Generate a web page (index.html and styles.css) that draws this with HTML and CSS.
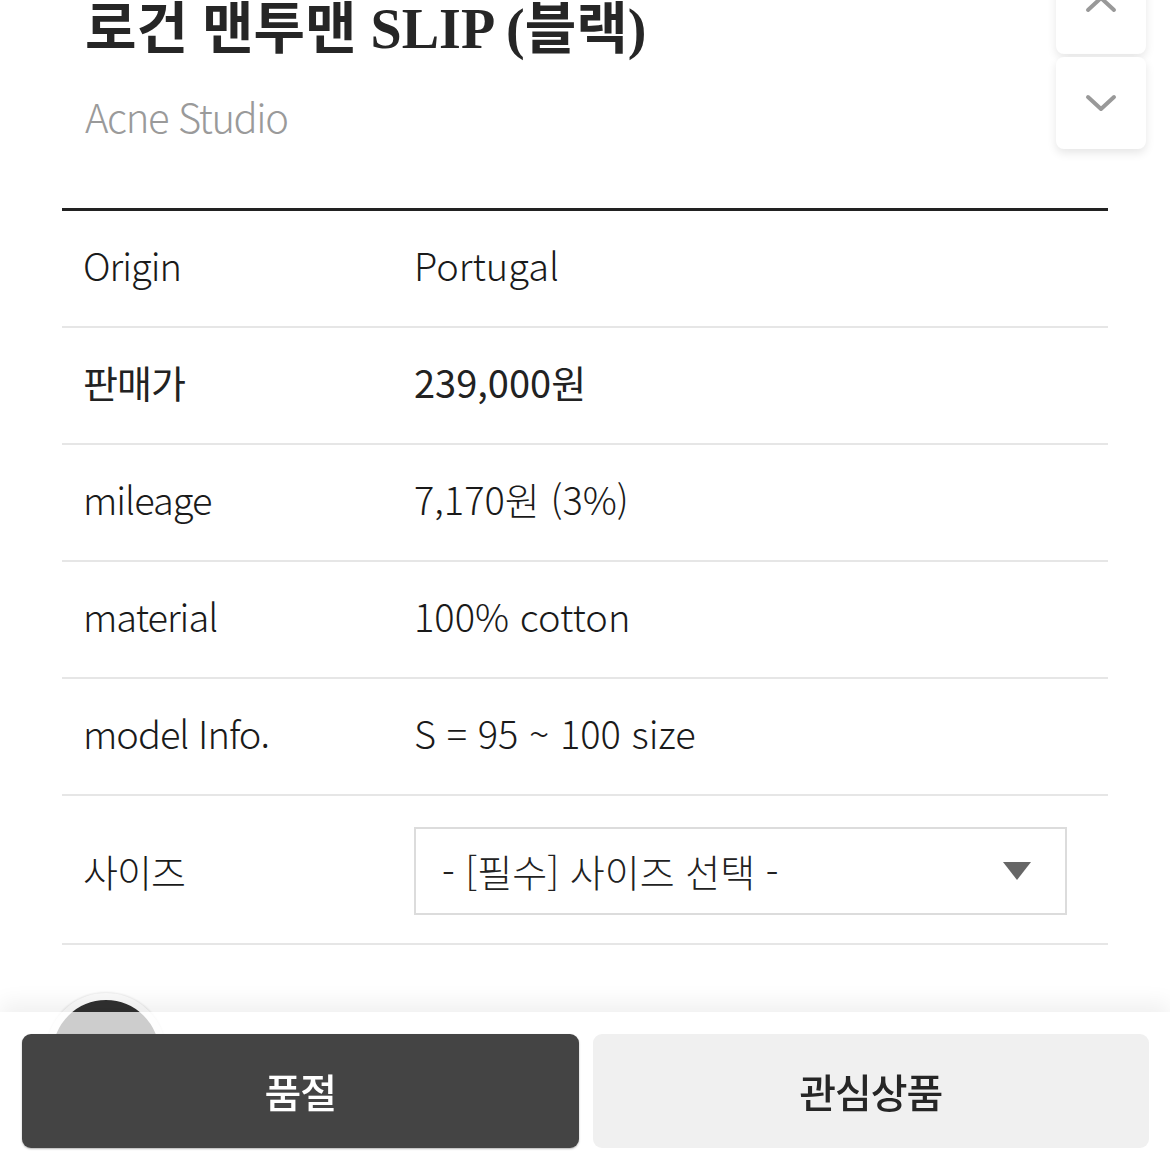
FILE: index.html
```html
<!DOCTYPE html>
<html lang="ko">
<head>
<meta charset="utf-8">
<title>로건 맨투맨 SLIP (블랙)</title>
<link rel="stylesheet" href="styles.css">
</head>
<body>
<main class="page">
  <header class="head">
    <h1 class="title">로건 맨투맨 SLIP (블랙)</h1>
    <p class="brand">Acne Studio</p>
  </header>
  <section class="info">
    <div class="row"><span class="label">Origin</span><span class="value">Portugal</span></div>
    <div class="row strong"><span class="label">판매가</span><span class="value">239,000원</span></div>
    <div class="row"><span class="label">mileage</span><span class="value">7,170원 (3%)</span></div>
    <div class="row"><span class="label">material</span><span class="value">100% cotton</span></div>
    <div class="row"><span class="label">model Info.</span><span class="value">S = 95 ~ 100 size</span></div>
    <div class="row size-row">
      <span class="label">사이즈</span>
      <div class="select">
        <span class="select-text">- [필수] 사이즈 선택 -</span>
        <span class="caret"></span>
      </div>
    </div>
  </section>
</main>

<div class="scroll-btns">
  <button class="sbtn up" aria-label="위로">
    <svg width="34" height="20" viewBox="0 0 34 20"><path d="M4 16 L17 4 L30 16" fill="none" stroke="#999" stroke-width="4" stroke-linecap="round" stroke-linejoin="round"/></svg>
  </button>
  <button class="sbtn down" aria-label="아래로">
    <svg width="34" height="20" viewBox="0 0 34 20"><path d="M4 4 L17 16 L30 4" fill="none" stroke="#999" stroke-width="4" stroke-linecap="round" stroke-linejoin="round"/></svg>
  </button>
</div>

<div class="float-circle"></div>

<footer class="bottom-bar">
  <button class="btn dark">품절</button>
  <button class="btn light">관심상품</button>
</footer>
</body>
</html>
```
FILE: styles.css
```css
* { box-sizing: border-box; }
html, body { margin: 0; padding: 0; background: #fff; }
body {
  font-family: "Noto Sans CJK KR", "Noto Sans", sans-serif;
  color: #333;
  width: 1170px;
  height: 1170px;
  overflow: hidden;
}
.page { padding: 0 62px; }
.head {
  display: flow-root;
  padding: 0 23px;
  border-bottom: 3px solid #222;
  height: 211px;
}
.title {
  margin: -7px 0 0;
  font-family: "Liberation Serif", "Noto Sans CJK KR", serif;
  font-weight: 700;
  font-size: 56px;
  line-height: 72px;
  color: #262626;
  letter-spacing: 0;
}
.brand {
  margin: 23px 0 0;
  font-size: 40px;
  line-height: 56px;
  font-weight: 300;
  color: #9a9a9a;
  letter-spacing: -1.4px;
}
.row {
  display: grid;
  grid-template-columns: 331px 1fr;
  align-items: center;
  padding: 27px 21px 34px;
  border-bottom: 2px solid #e6e6e6;
  font-size: 38px;
  line-height: 54px;
  font-weight: 300;
  color: #1a1a1a;
  letter-spacing: 0;
}
.label { letter-spacing: -1px; }
.row.strong { font-weight: 400; color: #222; }
.size-row { padding: 31px 41px 28px 21px; }
.select {
  height: 88px;
  border: 2px solid #dcdcdc;
  display: flex;
  align-items: center;
  justify-content: space-between;
  padding: 0 34px 0 26px;
}
.select-text { font-size: 38px; font-weight: 300; color: #222; letter-spacing: 0; }
.caret {
  width: 0; height: 0;
  border-left: 14px solid transparent;
  border-right: 14px solid transparent;
  border-top: 18px solid #666;
}
.scroll-btns {
  position: fixed;
  top: -38px;
  left: 1056px;
  width: 90px;
  display: flex;
  flex-direction: column;
  gap: 3px;
}
.sbtn {
  height: 92px;
  border: none;
  background: #fff;
  border-radius: 8px;
  box-shadow: 0 4px 10px rgba(0,0,0,0.10);
  display: flex;
  align-items: center;
  justify-content: center;
  padding: 0;
}
.sbtn.up { align-items: flex-end; padding-bottom: 40px; border-radius: 0 0 8px 8px; }
.float-circle {
  position: fixed;
  left: 46px;
  top: 993px;
  width: 120px;
  height: 120px;
  border-radius: 50%;
  background: #303030;
  border: 7px solid #fafafa;
  box-shadow: 0 0 3px rgba(0,0,0,0.18);
}
.bottom-bar {
  position: fixed;
  left: 0;
  top: 1012px;
  width: 1170px;
  height: 158px;
  background: rgba(255,255,255,0.76);
  box-shadow: 0 -10px 20px rgba(0,0,0,0.06);
  display: flex;
  gap: 14px;
  padding: 22px 21px 22px 22px;
}
.btn {
  flex: 1;
  border: none;
  border-radius: 9px;
  font-family: "Noto Sans CJK KR", sans-serif;
  font-size: 40px;
  font-weight: 500;
  letter-spacing: -1px;
}
.btn.dark { background: #444; color: #fff; box-shadow: 0 1px 2px rgba(0,0,0,0.3); }
.btn.light { background: #f0f0f0; color: #262626; }
```
